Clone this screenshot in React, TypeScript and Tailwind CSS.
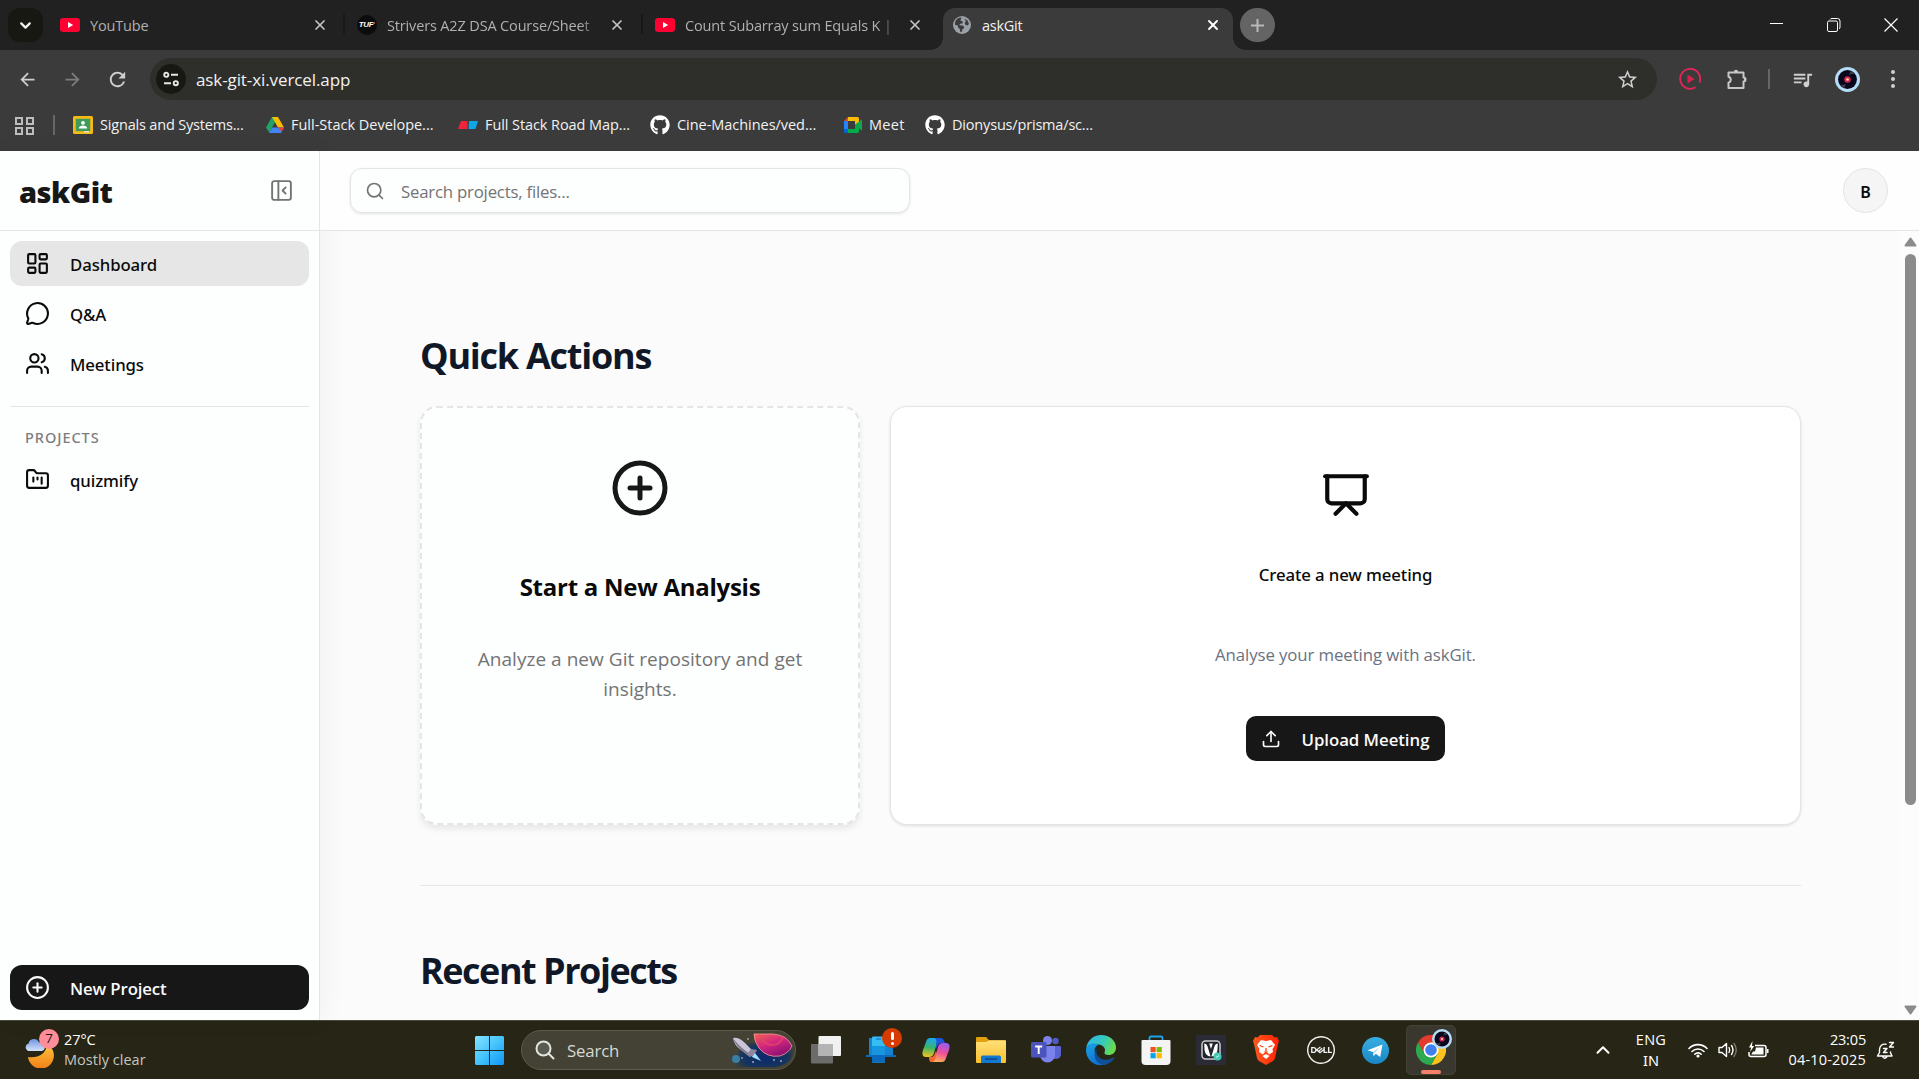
import type { ReactNode } from 'react'
import {
  ChevronDown,
  ChevronUp,
  CirclePlus,
  FolderKanban,
  LayoutDashboard,
  MessageCircle,
  PanelLeftClose,
  Presentation,
  Search,
  Upload,
  Users,
  X,
} from 'lucide-react'
import { FaGithub } from 'react-icons/fa'
import { SiDell } from 'react-icons/si'
import { MdArrowBack, MdArrowForward, MdQueueMusic, MdRefresh, MdStarBorder } from 'react-icons/md'

/* ---------- small drawings ---------- */

function YoutubeIcon() {
  return (
    <svg className="h-[14px] w-5 shrink-0" viewBox="0 0 20 14">
      <rect width="20" height="14" rx="3.2" fill="#ff0033" />
      <path d="M8 4v6l5.2-3z" fill="#fff" />
    </svg>
  )
}

function TufIcon() {
  return (
    <span className="flex h-5 w-5 shrink-0 items-center justify-center rounded-full bg-[#0c0c0c]">
      <span className="font-['Liberation_Sans',sans-serif] text-[8px] leading-none font-bold tracking-[-0.4px] text-white italic">
        TUF
      </span>
      <span className="mb-1 h-[2px] w-[2px] rounded-full bg-[#e0622f]" />
    </span>
  )
}

function GlobeIcon() {
  return (
    <svg className="h-[18px] w-[18px] shrink-0" viewBox="0 0 18 18">
      <circle cx="9" cy="9" r="9" fill="#9aa0a6" />
      <path
        d="M2 7.2c0-2.3 1.9-4.6 4.3-5.4L8.6 1.600 7.400 4.600l2.400 1-.4 1.900-2.600.2-.3 1.500 3.200.2 1.500 1.600-.3 1.500-1.600.8-.2 2.300-1.700.7-.6-3.200-1.700-1.500-.3-2L2 8.700z"
        fill="#3b3b3b"
      />
      <path d="M11.500 2.600l3.200 2.200 1.300 3.200-1.500 1.500-2.200-.7-.6-1.900 1.100-1.500z" fill="#3b3b3b" />
    </svg>
  )
}

function TuneIcon() {
  return (
    <svg className="h-[18px] w-[18px]" viewBox="0 0 18 18" fill="none" stroke="#e6e6e6" strokeWidth="1.9">
      <circle cx="4.300" cy="4.800" r="2.100" />
      <path d="M9 4.800h7M2 13.200h7" />
      <circle cx="13.800" cy="13.200" r="2.100" />
    </svg>
  )
}

function ClassroomIcon() {
  return (
    <svg className="h-[18px] w-5" viewBox="0 0 20 18">
      <rect width="20" height="18" rx="1.500" fill="#f5ba15" />
      <rect x="2.800" y="2.800" width="14.400" height="12.400" fill="#3f9b59" />
      <circle cx="10" cy="6.800" r="1.900" fill="#fff" />
      <path d="M5.800 12.400c.3-2 2-2.800 4.200-2.800s3.900.8 4.200 2.800z" fill="#fff" />
      <path d="M11 15.200h5v1.200h-5z" fill="#e8eaed" />
    </svg>
  )
}

function DriveIcon() {
  return (
    <svg className="h-4 w-[18px]" viewBox="0 0 18 16">
      <path d="M6 0h6L9 5.300 3.100 15.500 0 10.500z" fill="#1fa463" />
      <path d="M6 0h6l6 10.500h-6z" fill="#fbbc04" />
      <path d="M6 10.500h12L15 16H3z" fill="#4285f4" />
      <path d="M12 10.500h6L15.500 15z" fill="#ea4335" />
    </svg>
  )
}

function RoadmapIcon() {
  return (
    <svg className="h-2 w-5" viewBox="0 0 20 8">
      <path d="M3 0h6.500v8H0z" fill="#ef233c" />
      <path d="M11 0h9l-2.500 8H10.500z" fill="#0ea5e9" />
    </svg>
  )
}

function MeetIcon() {
  return (
    <svg className="h-4 w-[18px]" viewBox="0 0 18 16">
      <path d="M4 0h9.500q1.500 0 1.500 1.500V5l-4 3V4H4z" fill="#fbbc04" />
      <path d="M0 4l4-4v4z" fill="#ea4335" />
      <path d="M0 4h4v8H0z" fill="#2684fc" />
      <path d="M0 12h4v4H1.500Q0 16 0 14.500z" fill="#0066da" />
      <path d="M4 12h7V8l4 3v3.500q0 1.500-1.500 1.500H4z" fill="#00ac47" />
      <path d="M11 8l6-5q1-.7 1 .6v8.800q0 1.300-1 .6z" fill="#12a454" />
    </svg>
  )
}

function PuzzleIcon() {
  return (
    <svg className="h-[22px] w-[22px]" viewBox="0 0 22 22" fill="none" stroke="#c7c7c7" strokeWidth="2" strokeLinejoin="round">
      <path d="M2.500 4.500h15v5a2 2 0 0 1 0 4v6.500h-15v-5.200c3-1 3-5 0-6z" />
      <path d="M7.800 4a2.200 2.200 0 0 1 4.400 0zM18 9.300a2.200 2.200 0 0 1 0 4.400z" fill="#c7c7c7" stroke="none" />
    </svg>
  )
}

function VinylAvatar({ className }: { className: string }) {
  return (
    <svg className={className} viewBox="0 0 26 26">
      <circle cx="13" cy="13" r="13" fill="#b5dcf7" />
      <circle cx="13" cy="13" r="9.800" fill="#07061a" />
      <path d="M14.500 8l2-3.800a9.800 9.800 0 0 1 4 2.800zM11.500 18l-2 3.800a9.800 9.800 0 0 1-4-2.800z" fill="#3c3d4d" />
      <circle cx="13" cy="13" r="3.400" fill="#d4235c" />
      <circle cx="13" cy="13" r="1.400" fill="#ffd98a" />
    </svg>
  )
}

/* ---------- browser chrome ---------- */

function Tab({ icon, title, className, fade }: { icon: ReactNode; title: string; className: string; fade?: boolean }) {
  return (
    <div className={'flex h-[42px] items-center pb-2 ' + className}>
      {icon}
      <span
        className={
          'ml-[10px] flex-1 overflow-hidden pt-px text-[14.5px] tracking-[-0.15px] whitespace-nowrap text-[#b0b0b0] ' +
          (fade ? 'mask-r-from-90% mask-r-to-100%' : '')
        }
      >
        {title}
      </span>
      <X className="ml-2 h-4 w-4 shrink-0 text-[#c4c4c4]" strokeWidth={2.600} />
    </div>
  )
}

function TabStrip() {
  return (
    <div className="flex h-[50px] items-start bg-[#212121] pt-2">
      <button className="ml-2 flex h-[34px] w-[35px] items-center justify-center rounded-[12px] bg-[#171812]">
        <ChevronDown className="h-[17px] w-[17px] text-[#eeeeee]" strokeWidth={3.200} />
      </button>
      <Tab icon={<YoutubeIcon />} title="YouTube" className="ml-[17px] w-[268px]" />
      <span className="mt-[6px] ml-[15px] h-5 w-[2px] bg-[#181912]" />
      <Tab icon={<TufIcon />} title="Strivers A2Z DSA Course/Sheet" className="ml-[12px] w-[268px]" fade />
      <span className="mt-[6px] ml-[16px] h-5 w-[2px] bg-[#181912]" />
      <Tab icon={<YoutubeIcon />} title="Count Subarray sum Equals K |" className="ml-[12px] w-[268px]" fade />
      <div className="relative ml-[20px] flex h-[42px] w-[290px] items-center rounded-t-[12px] bg-[#3b3b3b] pb-2 pl-[10px]">
        <span className="absolute bottom-0 -left-3 h-3 w-3 bg-[radial-gradient(circle_at_0_0,#212121_11.5px,#3b3b3b_12px)]" />
        <span className="absolute -right-3 bottom-0 h-3 w-3 bg-[radial-gradient(circle_at_100%_0,#212121_11.5px,#3b3b3b_12px)]" />
        <GlobeIcon />
        <span className="ml-[11px] flex-1 pt-px text-[14.5px] tracking-[-0.26px] text-[#f1f1f1]">askGit</span>
        <X className="mr-[12px] h-4 w-4 text-white" strokeWidth={2.800} />
      </div>
      <span className="ml-[7px] flex h-[34px] w-[35px] items-center justify-center rounded-full bg-[#646464]">
        <svg className="h-[13px] w-[13px]" viewBox="0 0 13 13" stroke="#b9b9b9" strokeWidth="2">
          <path d="M6.500 0v13M0 6.500h13" />
        </svg>
      </span>
      <div className="mt-[10px] ml-auto flex items-center gap-[43px] pr-[21px]">
        <svg className="h-[14px] w-[14px]" viewBox="0 0 14 14" stroke="#fff">
          <path d="M0 5.500h13" />
        </svg>
        <svg className="h-[14px] w-[14px]" viewBox="0 0 14 14" fill="none" stroke="#fff">
          <rect x=".5" y="3" width="10" height="10.500" rx="1.500" />
          <path d="M3 1.500Q3.500.5 5 .5h5.500Q13 .5 13 3v6q0 1.500-1 2" />
        </svg>
        <svg className="h-[14px] w-[14px]" viewBox="0 0 14 14" stroke="#fff" strokeWidth="1.200">
          <path d="M.5.500l13 13M13.500.500l-13 13" />
        </svg>
      </div>
    </div>
  )
}

function Toolbar() {
  return (
    <div className="flex h-[58px] items-center bg-[#3b3b3b]">
      <MdArrowBack className="ml-[17px] h-[21px] w-[21px] text-[#cfcfcf]" />
      <MdArrowForward className="ml-[24px] h-[21px] w-[21px] text-[#7d7d7d]" />
      <MdRefresh className="ml-[23px] h-[23px] w-[23px] text-[#cfcfcf]" />
      <div className="ml-[21px] flex h-[42px] w-[1507px] items-center rounded-full bg-[#2e2f2b]">
        <span className="ml-[6px] flex h-[30px] w-[30px] items-center justify-center rounded-full bg-[#171812]">
          <TuneIcon />
        </span>
        <span className="mt-[2px] ml-[10px] flex-1 text-[17px] tracking-[-0.1px] text-[#f2f2f2]">ask-git-xi.vercel.app</span>
        <MdStarBorder className="mr-[18px] h-[23px] w-[23px] text-[#cfcfcf]" />
      </div>
      <svg className="ml-[22px] h-[22px] w-[22px]" viewBox="0 0 22 22">
        <path d="M16.500 19.300A10 10 0 1 1 20.500 14.500" fill="none" stroke="#e3265a" strokeWidth="1.800" />
        <path d="M8.500 6.500v9l7-4.500z" fill="#d8224e" />
      </svg>
      <span className="ml-[25px]">
        <PuzzleIcon />
      </span>
      <span className="ml-[20px] h-5 w-[2px] bg-[#666666]" />
      <MdQueueMusic className="ml-[21px] h-[23px] w-[23px] text-[#cfcfcf]" />
      <VinylAvatar className="ml-[21px] h-[25px] w-[25px]" />
      <span className="ml-[31px] flex flex-col gap-[3px]">
        <span className="h-1 w-1 rounded-full bg-[#cfcfcf]" />
        <span className="h-1 w-1 rounded-full bg-[#cfcfcf]" />
        <span className="h-1 w-1 rounded-full bg-[#cfcfcf]" />
      </span>
    </div>
  )
}

function Bookmark({ icon, title, className }: { icon: ReactNode; title: string; className: string }) {
  return (
    <span className={'flex items-center gap-[7px] whitespace-nowrap ' + className}>
      {icon}
      <span className="text-[14.5px] text-[#f2f2f2]">{title}</span>
    </span>
  )
}

function BookmarksBar() {
  return (
    <div className="flex h-[43px] items-center bg-[#3b3b3b] pb-[9px]">
      <svg className="mt-[2px] ml-[15px] h-[18px] w-[19px]" viewBox="0 0 19 18" fill="none" stroke="#bdbdbd" strokeWidth="2">
        <path d="M1 1h6v6H1zM12 1h6v6h-6zM1 11h6v6H1zM12 11h6v6h-6z" />
      </svg>
      <span className="ml-[19px] h-5 w-[2px] bg-[#666666]" />
      <Bookmark icon={<ClassroomIcon />} title="Signals and Systems..." className="ml-[18px] w-[193px] tracking-[-0.18px]" />
      <Bookmark icon={<DriveIcon />} title="Full-Stack Develope..." className="w-[192px] tracking-[-0.01px]" />
      <Bookmark icon={<RoadmapIcon />} title="Full Stack Road Map..." className="w-[192px] tracking-[-0.08px]" />
      <Bookmark icon={<FaGithub className="h-5 w-5 text-white" />} title="Cine-Machines/ved..." className="w-[194px] tracking-[-0.04px]" />
      <Bookmark icon={<MeetIcon />} title="Meet" className="w-[81px] tracking-[0.3px]" />
      <Bookmark icon={<FaGithub className="h-5 w-5 text-white" />} title="Dionysus/prisma/sc..." className="tracking-[-0.18px]" />
    </div>
  )
}

/* ---------- application ---------- */

function NavItem({ icon, label, className }: { icon: ReactNode; label: string; className?: string }) {
  return (
    <a className={'flex h-[45px] items-center gap-5 rounded-[12px] px-[15px] text-[#0a0a0a] ' + (className ?? '')}>
      {icon}
      <span className="pt-[2px] font-['Noto_Sans',sans-serif] text-[16.8px] font-medium tracking-[-0.1px]">{label}</span>
    </a>
  )
}

function Sidebar() {
  return (
    <aside className="z-10 flex w-[320px] shrink-0 flex-col border-r border-[#e4e5e5] bg-[#fdfefe] shadow-[4px_0_24px_rgba(0,0,0,0.045)]">
      <div className="flex h-20 shrink-0 items-center justify-between border-b border-[#e4e5e5] pr-[25px] pl-[19px]">
        <span className="pt-[2px] font-['Noto_Sans',sans-serif] text-[29px] font-black tracking-[-0.5px] text-[#171717]">askGit</span>
        <PanelLeftClose className="h-[25px] w-[25px] text-[#737373]" strokeWidth={1.800} />
      </div>
      <nav className="mx-[10px] mt-[10px] flex flex-col gap-[5px]">
        <NavItem icon={<LayoutDashboard className="h-[25px] w-[25px]" />} label="Dashboard" className="bg-[#e5e6e5]" />
        <NavItem icon={<MessageCircle className="h-[25px] w-[25px]" />} label="Q&amp;A" />
        <NavItem icon={<Users className="h-[25px] w-[25px]" />} label="Meetings" />
      </nav>
      <div className="mx-[10px] mt-5 border-t border-[#e4e5e5]" />
      <div className="mt-[18px] ml-[25px] flex h-[25px] items-center font-['Noto_Sans',sans-serif] text-[14.5px] font-medium tracking-[0.95px] text-[#7c7d7d]">
        PROJECTS
      </div>
      <div className="mx-[10px] mt-[7px]">
        <NavItem icon={<FolderKanban className="h-[25px] w-[25px]" />} label="quizmify" />
      </div>
      <button className="mx-[10px] mt-auto mb-[10px] flex h-[45px] shrink-0 items-center gap-5 rounded-[12px] bg-[#171717] px-[15px] text-[#fafafa]">
        <CirclePlus className="h-[25px] w-[25px]" />
        <span className="pt-[2px] text-[16.8px] font-semibold tracking-[-0.13px]">New Project</span>
      </button>
    </aside>
  )
}

function Header() {
  return (
    <header className="z-20 flex h-20 shrink-0 items-center justify-between border-b border-[#e4e5e5] bg-[#fefefe] pr-[31px] pl-[30px]">
      <div className="flex h-[45px] w-[560px] items-center rounded-[12px] border border-[#e4e5e5] bg-[#fdfefe] pl-[14px] shadow-[0_1px_3px_rgba(0,0,0,0.1)]">
        <Search className="h-5 w-5 text-[#737373]" />
        <span className="ml-4 pt-[2px] text-[16.8px] tracking-[-0.21px] text-[#737373]">Search projects, files...</span>
      </div>
      <span className="flex h-[45px] w-[45px] items-center justify-center rounded-full border border-[#e4e4e4] bg-[#f5f5f5] pt-[2px] font-['Noto_Sans',sans-serif] text-[16px] font-semibold text-[#0a0a0a]">
        B
      </span>
    </header>
  )
}

function Dashboard() {
  return (
    <main className="flex min-h-0 flex-1 bg-[#fbfbfb]">
      <div className="w-[1520px] overflow-hidden pt-[100px] pl-[100px]">
        <div className="w-[1381px]">
          <h2 className="h-[50px] text-[36px] leading-[50px] font-bold tracking-[-1.25px] text-[#101828]">Quick Actions</h2>
          <div className="mt-[25px] flex h-[419px] gap-[30px]">
            <section className="flex w-[440px] shrink-0 flex-col items-center rounded-[17px] border-2 border-dashed border-[#e5e5e5] bg-[#fdfefe] pt-[50px] text-center shadow-[0_4px_6px_rgba(0,0,0,0.08)]">
              <CirclePlus className="h-[60px] w-[60px] text-[#171717]" />
              <h3 className="mt-[54px] text-[24px] leading-[30px] font-bold tracking-[-0.26px] text-[#0a0a0a]">Start a New Analysis</h3>
              <p className="mt-[42px] w-[350px] text-[19px] leading-[30px] tracking-[0.04px] text-[#737373]">
                Analyze a new Git repository and get insights.
              </p>
            </section>
            <section className="flex w-[911px] shrink-0 flex-col items-center rounded-[17px] border border-[#e5e5e5] bg-white pt-[63px] shadow-[0_1px_3px_rgba(0,0,0,0.12)]">
              <Presentation className="h-[50px] w-[50px] text-[#0a0a0a]" />
              <h3 className="mt-[43px] font-['Noto_Sans',sans-serif] text-[16.8px] leading-[24px] font-medium tracking-[-0.11px] text-[#0a0a0a]">
                Create a new meeting
              </h3>
              <p className="mt-[56px] text-[16.8px] leading-[24px] tracking-[-0.09px] text-[#6a7282]">Analyse your meeting with askGit.</p>
              <button className="mt-[49px] flex h-[45px] w-[199px] items-center rounded-[10px] bg-[#171717] pl-[15px] text-[#fafafa]">
                <Upload className="h-5 w-5" />
                <span className="ml-[20.5px] pt-[2px] text-[16.8px] font-semibold tracking-[-0.04px]">Upload Meeting</span>
              </button>
            </section>
          </div>
          <div className="mt-[60px] border-t border-[#e5e5e5]" />
          <h2 className="mt-[60px] h-[50px] text-[36px] leading-[50px] font-bold tracking-[-1.48px] text-[#101828]">Recent Projects</h2>
        </div>
      </div>
      <div className="ml-auto flex w-[19px] flex-col items-center bg-[#fcfcfc] pt-[6px] pb-[5px] pl-px">
        <svg className="h-[10px] w-[13px] shrink-0" viewBox="0 0 13 10">
          <path d="M6.500 1.500L11.500 8.500h-10z" fill="#8b8b8b" stroke="#8b8b8b" strokeWidth="2" strokeLinejoin="round" />
        </svg>
        <span className="mt-[7px] h-[551px] w-[11px] rounded-full bg-[#8b8b8b]" />
        <svg className="mt-auto h-[10px] w-[13px] shrink-0" viewBox="0 0 13 10">
          <path d="M6.500 8.500L11.500 1.500h-10z" fill="#8b8b8b" stroke="#8b8b8b" strokeWidth="2" strokeLinejoin="round" />
        </svg>
      </div>
    </main>
  )
}

/* ---------- Windows taskbar ---------- */

function WeatherIcon() {
  return (
    <svg className="h-[36px] w-[36px]" viewBox="0 0 36 36">
      <defs>
        <linearGradient id="moon" x1="0" y1="0" x2="0" y2="1">
          <stop offset="0" stopColor="#ffc83d" />
          <stop offset="1" stopColor="#f08018" />
        </linearGradient>
        <linearGradient id="cloud" x1="0" y1="0" x2="0" y2="1">
          <stop offset="0" stopColor="#6f93e0" />
          <stop offset="1" stopColor="#d5e2fb" />
        </linearGradient>
      </defs>
      <path d="M22.500 11c1 8-5 15.500-18.500 14A13 13 0 1 0 27.500 16z" fill="url(#moon)" />
      <path d="M4 19a4 4 0 0 1 .5-7.500 5.500 5.500 0 0 1 10.500-1A4.300 4.300 0 0 1 18 19z" fill="url(#cloud)" />
    </svg>
  )
}

function StartIcon() {
  return (
    <svg className="h-[29px] w-[29px]" viewBox="0 0 29 29">
      <defs>
        <linearGradient id="win" x1="0" y1="0" x2="1" y2="1">
          <stop offset="0" stopColor="#86e3ff" />
          <stop offset=".5" stopColor="#44c3fc" />
          <stop offset="1" stopColor="#0f94f5" />
        </linearGradient>
      </defs>
      <path d="M1 0h13v14H0V1zM15 0h13l1 1v13H15zM0 15h14v14H1l-1-1zM15 15h14v13l-1 1H15z" fill="url(#win)" />
    </svg>
  )
}

function SpaceArt() {
  return (
    <svg className="h-[34px] w-[62px]" viewBox="0 0 62 34">
      <defs>
        <radialGradient id="sky" cx=".55" cy=".7" r=".55">
          <stop offset="0" stopColor="#0d2a6d" />
          <stop offset=".65" stopColor="#15345e" />
          <stop offset="1" stopColor="#15345e" stopOpacity="0" />
        </radialGradient>
        <linearGradient id="planet" x1="0" y1="0" x2=".6" y2="1">
          <stop offset="0" stopColor="#f0624f" />
          <stop offset=".5" stopColor="#d42780" />
          <stop offset="1" stopColor="#8c1172" />
        </linearGradient>
      </defs>
      <path d="M0 34L12 10H24V1H44Q62 3 62 17T44 34z" fill="url(#sky)" />
      <path d="M23 1H42Q56 2 61 13Q58 20 49 23Q36 25 28 15Q23 8 23 1z" fill="url(#planet)" stroke="#ff9b9b" strokeWidth=".8" />
      <path d="M28 1q4 10 12 11t13-9" fill="none" stroke="#e84b63" strokeWidth="2" opacity=".6" />
      <path d="M2 5q6-1 12 5l9 9-4 5-9-7Q3 12 2 5z" fill="#c9c4d6" />
      <path d="M2 5q2 6 8 12l9 7 1.500-2Q8 14 2 5z" fill="#81798f" />
      <path d="M16 21l4-5 6 1-4 7z" fill="#8f879e" />
      <path d="M24 20l6 8-9-4z" fill="#9fe1ff" />
      <circle cx="5" cy="26" r="4" fill="#3a7ea6" />
      <g fill="#fff">
        <circle cx="17" cy="6" r=".7" />
        <circle cx="11" cy="25" r=".7" />
        <circle cx="22" cy="29" r=".8" />
        <circle cx="43" cy="27" r=".8" />
        <circle cx="50" cy="28" r=".8" />
      </g>
    </svg>
  )
}

function TaskViewIcon() {
  return (
    <svg className="h-[30px] w-[30px]" viewBox="0 0 30 30">
      <rect x="0" y="9" width="22" height="19.500" rx="1" fill="#6c6c6c" />
      <rect x="7.500" y="1" width="22.500" height="20" rx="1" fill="#f1f1f1" />
      <rect x="7.500" y="9" width="14.500" height="12" fill="#b4b4b4" />
    </svg>
  )
}

function PhoneLinkIcon() {
  return (
    <svg className="h-[30px] w-[30px]" viewBox="0 0 30 30">
      <path d="M3 3h24v17H3z" fill="#1583d4" />
      <path d="M0 20h30v2H0z" fill="#0c6ab8" />
      <rect x="6" y="1.500" width="13" height="26" rx="1.200" fill="#35bdf3" />
      <path d="M6 11h13v15.500q0 1-1 1H7q-1 0-1-1z" fill="#1795df" />
      <path d="M6 20h13v6.500q0 1-1 1H7q-1 0-1-1z" fill="#0b69bd" />
      <path d="M10 4h5" stroke="#0b69bd" />
    </svg>
  )
}

function CopilotIcon() {
  return (
    <svg className="h-[28px] w-[28px]" viewBox="0 0 28 28">
      <defs>
        <linearGradient id="cpa" x1=".4" y1="0" x2=".3" y2="1">
          <stop offset="0" stopColor="#1ba7f0" />
          <stop offset=".5" stopColor="#37b56b" />
          <stop offset="1" stopColor="#f8c21a" />
        </linearGradient>
        <linearGradient id="cpb" x1=".7" y1="0" x2=".4" y2="1">
          <stop offset="0" stopColor="#9a5bf2" />
          <stop offset=".5" stopColor="#ef4f9a" />
          <stop offset="1" stopColor="#ffae5a" />
        </linearGradient>
      </defs>
      <path d="M8 2h11q-3 1-4 5l-3 10q-1 4-5 4H4Q-1 21 1 14l3-8q1-4 4-4z" fill="url(#cpa)" />
      <path d="M13 2h6q2 0 3 3l1 2h-3q-4 0-5 4l-.5 2q-1-5 0-8z" fill="#1f56dd" />
      <path d="M20 26H9q3-1 4-5l3-10q1-4 5-4h3q5 0 3 7l-3 8q-1 4-4 4z" fill="url(#cpb)" />
      <path d="M7 21h2q3 0 4-4l1-2q1 4-1 9-1 2-4 2-2 0-2-5z" fill="#f4692f" />
    </svg>
  )
}

function ExplorerIcon() {
  return (
    <svg className="h-[30px] w-[30px]" viewBox="0 0 30 30">
      <defs>
        <linearGradient id="fold" x1="0" y1="0" x2="0" y2="1">
          <stop offset="0" stopColor="#ffe07b" />
          <stop offset="1" stopColor="#fbc02a" />
        </linearGradient>
      </defs>
      <path d="M0 3q0-1 1-1h9l3 3h16q1 0 1 1v8H0z" fill="#e0a010" />
      <path d="M0 8q0-1 1-1h9l3-1.500h16q1 0 1 1V27q0 1-1 1H1q-1 0-1-1z" fill="url(#fold)" />
      <path d="M5 28v-6q0-1.500 1.500-1.500h17q1.500 0 1.500 1.500v6z" fill="#1378cf" />
      <path d="M9 24h12" stroke="#0b4b94" strokeWidth="1.600" />
    </svg>
  )
}

function TeamsIcon() {
  return (
    <svg className="h-[30px] w-[30px]" viewBox="0 0 30 30">
      <circle cx="24.500" cy="6" r="3.200" fill="#5059c9" />
      <path d="M19 11h10q1 0 1 1v7a5 5 0 0 1-9 3z" fill="#5b63d3" />
      <circle cx="16.500" cy="5.500" r="4.500" fill="#7b83eb" />
      <path d="M9 11h15v9a7.500 7.500 0 0 1-15 0z" fill="#7b83eb" />
      <rect x="0" y="7" width="15.500" height="15.500" rx="1.500" fill="#4b53bc" />
      <path d="M4.200 11.500h7M7.700 11.500V19" stroke="#fff" strokeWidth="1.900" />
    </svg>
  )
}

function EdgeIcon() {
  return (
    <svg className="h-[30px] w-[30px]" viewBox="0 0 30 30">
      <defs>
        <linearGradient id="edgeTop" x1="0" y1=".2" x2="1" y2=".5">
          <stop offset="0" stopColor="#2fb6ea" />
          <stop offset=".55" stopColor="#35c9bd" />
          <stop offset="1" stopColor="#6bdc45" />
        </linearGradient>
        <linearGradient id="edgeLow" x1="0" y1="0" x2=".5" y2="1">
          <stop offset="0" stopColor="#1aa2e6" />
          <stop offset="1" stopColor="#0f6fd0" />
        </linearGradient>
      </defs>
      <path d="M.2 13A15 15 0 0 1 15 0c9 0 15 6 15 12.500 0 5-3.500 7.500-7.500 7.500-3 0-4.500-1-4-2.500 1.500-3 0-7-5.500-8C8 9 2 9 .2 13z" fill="url(#edgeTop)" />
      <path d="M.2 13C2 8.500 8 7.500 13 9.500c-4 1.500-5 5-4 9 1.500 6 6.500 9 11 11A15 15 0 0 1 0 15z" fill="url(#edgeLow)" />
      <path d="M11 14c-2 4 1 9 6 10.500 4 1 8-.5 10.500-2 .8-.4 1.200.2.800.8A15 15 0 0 1 17 30C9 28 6 19 11 14z" fill="#0f4f97" />
    </svg>
  )
}

function StoreIcon() {
  return (
    <svg className="h-[30px] w-[30px]" viewBox="0 0 30 30">
      <path d="M8.500 7V3q0-1.500 1.500-1.500h10q1.500 0 1.500 1.500v4" fill="none" stroke="#1ea0ea" strokeWidth="1.800" />
      <path d="M.5 6q0-1 1-1h27q1 0 1 1v20q0 4-4 4h-21q-4 0-4-4z" fill="#f4f4f4" />
      <path d="M9.500 12h5.200v5.200H9.500z" fill="#f25022" />
      <path d="M15.600 12h5.200v5.200h-5.200z" fill="#7fba00" />
      <path d="M9.500 18.100h5.200v5.200H9.500z" fill="#00a4ef" />
      <path d="M15.600 18.100h5.200v5.200h-5.200z" fill="#ffb900" />
    </svg>
  )
}

function WingsIcon() {
  return (
    <svg className="h-[30px] w-[30px]" viewBox="0 0 30 30">
      <rect width="30" height="30" fill="#2b2b38" />
      <rect x="6" y="6" width="18" height="18" rx="3.500" fill="#22232c" stroke="#c9c9cc" strokeWidth="1.500" />
      <path d="M8.200 8.500q2.500 0 3.200 2.500l3.200 10.500q-5-.5-6-6zM21.800 8.500q-2.500 0-3.200 2.500l-3.200 10.500q5-.5 6-6z" fill="#fff" />
      <path d="M13.200 8.500h3.600L15 14z" fill="#fff" />
      <circle cx="21.500" cy="21.500" r="4" fill="#45c9b4" />
      <path d="M20 22.500l3-2" stroke="#c9fff4" />
    </svg>
  )
}

function BraveIcon() {
  return (
    <svg className="h-[30px] w-[26px]" viewBox="0 0 26 30">
      <defs>
        <linearGradient id="brave" x1="0" y1="0" x2="1" y2="0">
          <stop offset="0" stopColor="#ff5a1f" />
          <stop offset="1" stopColor="#ff2204" />
        </linearGradient>
      </defs>
      <path d="M7 0h12l2.500 2.500L24 2l2 4-1 3-3 14q-.5 2-2 3l-7 4-7-4q-1.500-1-2-3L1 9 0 6l2-4 2.500.5z" fill="url(#brave)" />
      <path
        d="M8 5l5 1 5-1 4 5-2.500 4 .5 3-4 2.500-1-1.500-2-1-2 1-1 1.500L6 17l.5-3L4 10z"
        fill="#fff"
      />
      <path d="M9.500 21l3.500-2 3.500 2-3.500 3z" fill="#fff" />
      <path d="M6.500 10.500l4 1.500M19.500 10.500l-4 1.500M11.500 16.500l1.500.8 1.500-.8M13 13v3" stroke="#ff3b10" strokeWidth="1.300" fill="none" />
    </svg>
  )
}

function TelegramIcon() {
  return (
    <svg className="h-[27px] w-[27px]" viewBox="0 0 27 27">
      <defs>
        <linearGradient id="tg" x1="0" y1="0" x2="0" y2="1">
          <stop offset="0" stopColor="#37aee2" />
          <stop offset="1" stopColor="#1a86c4" />
        </linearGradient>
      </defs>
      <circle cx="13.500" cy="13.500" r="13.500" fill="url(#tg)" />
      <path d="M5.500 13.200L20.500 7.500 18.200 20l-4.400-3.200-2.300 2.400-.5-4.200z" fill="#fff" />
      <path d="M11 15l6.500-5-5 6-1 3.200z" fill="#a9d4ee" />
    </svg>
  )
}

function ChromeIcon() {
  return (
    <svg className="h-[30px] w-[30px]" viewBox="0 0 30 30">
      <path d="M2 7.500a15 15 0 0 1 26 0L15 8.500 8.500 18.700z" fill="#e33b2e" />
      <path d="M28 7.500A15 15 0 0 1 15 30l6.500-11.300L15 7.500z" fill="#fcc31e" />
      <path d="M15 30A15 15 0 0 1 2 7.500l6.500 11.200 13 0z" fill="#2da94f" />
      <circle cx="15" cy="15" r="7.500" fill="#fff" />
      <circle cx="15" cy="15" r="5.800" fill="#3f7fee" />
    </svg>
  )
}

function TaskCell({ children }: { children: ReactNode }) {
  return <span className="relative flex h-[50px] w-[55px] shrink-0 items-center justify-center">{children}</span>
}

function Taskbar() {
  return (
    <footer className="flex h-[59px] shrink-0 items-center border-t border-[#48483c] bg-[#272616] font-['Open_Sans',sans-serif]">
      <div className="flex w-[475px] items-center">
        <span className="relative ml-[24px]">
          <WeatherIcon />
          <span className="absolute -top-[3px] left-[15px] flex h-5 w-5 items-center justify-center rounded-full bg-[#ff8e99] text-[13.5px] leading-none text-[#1b1b1b]">
            7
          </span>
        </span>
        <span className="ml-[4px] flex flex-col text-[14.5px] leading-[20px] text-white">
          <span className="tracking-[-0.1px]">27°C</span>
          <span className="tracking-[0.03px] text-[#c5c5c0]">Mostly clear</span>
        </span>
      </div>
      <StartIcon />
      <div className="ml-[17px] flex h-10 w-[275px] items-center rounded-full border border-[#5c5b4c] bg-[#434235] pl-[13px]">
        <svg className="h-5 w-5" viewBox="0 0 20 20" fill="none" stroke="#e4e4e0" strokeWidth="2">
          <circle cx="8.500" cy="8.500" r="7" fill="#595a50" />
          <path d="M13.500 13.500l5 5" strokeLinecap="round" />
        </svg>
        <span className="ml-[12px] flex-1 pt-px text-[16.8px] tracking-[-0.17px] text-[#d8d8d4]">Search</span>
        <span className="mr-[2px]">
          <SpaceArt />
        </span>
      </div>
      <div className="ml-[2px] flex">
        <TaskCell>
          <TaskViewIcon />
        </TaskCell>
        <TaskCell>
          <PhoneLinkIcon />
          <span className="absolute top-[3px] left-[29px] flex h-5 w-5 flex-col items-center justify-center gap-[2px] rounded-full bg-[#d83b01]">
            <span className="h-2 w-[3px] rounded-sm bg-white" />
            <span className="h-[3px] w-[3px] rounded-full bg-white" />
          </span>
        </TaskCell>
        <TaskCell>
          <CopilotIcon />
        </TaskCell>
        <TaskCell>
          <ExplorerIcon />
        </TaskCell>
        <TaskCell>
          <TeamsIcon />
        </TaskCell>
        <TaskCell>
          <EdgeIcon />
        </TaskCell>
        <TaskCell>
          <StoreIcon />
        </TaskCell>
        <TaskCell>
          <WingsIcon />
        </TaskCell>
        <TaskCell>
          <BraveIcon />
        </TaskCell>
        <TaskCell>
          <SiDell className="h-[28px] w-[28px] text-[#f2f2f2]" />
        </TaskCell>
        <TaskCell>
          <TelegramIcon />
        </TaskCell>
        <TaskCell>
          <span className="flex h-[50px] w-[50px] items-center justify-center rounded-[5px] border border-[#444235] bg-[#3a372f]">
            <ChromeIcon />
          </span>
          <VinylAvatar className="absolute top-[4px] left-[29px] h-5 w-5" />
          <span className="absolute bottom-[1px] left-[18px] h-[4px] w-5 rounded-full bg-[#f4816a]" />
        </TaskCell>
      </div>
      <ChevronUp className="ml-[134px] h-[22px] w-[22px] text-white" strokeWidth={2.200} />
      <span className="ml-[16px] flex w-[42px] flex-col items-center text-[14.5px] leading-[20px] text-white">
        <span className="tracking-[0.26px]">ENG</span>
        <span className="font-['Noto_Sans',sans-serif]">IN</span>
      </span>
      <svg className="ml-[16px] h-[16px] w-[20px]" viewBox="0 0 20 16" fill="none" stroke="#fff" strokeWidth="1.600" strokeLinecap="round">
        <path d="M1 6.500a12.500 12.500 0 0 1 18 0M4 9.500a8.500 8.500 0 0 1 12 0M6.800 12.200a4.500 4.500 0 0 1 6.400 0" />
        <circle cx="10" cy="14" r="1.600" fill="#fff" stroke="none" />
      </svg>
      <svg className="ml-[10px] h-[18px] w-[20px]" viewBox="0 0 20 18" fill="none" stroke="#fff" strokeWidth="1.400" strokeLinejoin="round" strokeLinecap="round">
        <path d="M1 6.500h3L8.500 2.500v13L4 11.500H1z" />
        <path d="M11 6.500q1.500 2.500 0 5M13.500 4.500q3 4.500 0 9" />
        <path d="M16 2.500q4.500 6.500 0 13" stroke="#77776c" />
      </svg>
      <svg className="ml-[10px] h-[18px] w-[21px]" viewBox="0 0 21 18">
        <path d="M7 4.500h9q2 0 2 2v7q0 2-2 2H3q-2 0-2-2V11" fill="none" stroke="#fff" strokeWidth="1.500" />
        <path d="M8 6.500h7.500v7H3.200L5 10.500h2z" fill="#fff" />
        <path d="M19 8h1.500v4H19z" fill="#fff" />
        <path d="M4.500 0L1 6.500h2.200L2 11l4.200-6H4z" fill="#fff" />
      </svg>
      <span className="ml-auto flex flex-col items-end text-[14.5px] leading-[20px] text-white">
        <span className="tracking-[-0.17px]">23:05</span>
        <span className="tracking-[0.18px]">04-10-2025</span>
      </span>
      <svg className="mr-[24px] ml-[10px] h-[19px] w-[19px]" viewBox="0 0 19 19" fill="none" stroke="#fff" strokeWidth="1.400" strokeLinecap="round" strokeLinejoin="round">
        <path d="M10 3.200Q4 2.500 3.500 8.500v3L1.500 15h14.500l-1.500-3.200V11M6.500 15.500q2 3.500 4.500 0" />
        <path d="M7.500 7.500h3.500l-3.500 4h3.500M13.500 1.500h4l-4 4.500h4" />
      </svg>
    </footer>
  )
}

export default function App() {
  return (
    <div className="flex h-[1079px] w-[1919px] flex-col overflow-hidden bg-white font-['Open_Sans',sans-serif]">
      <TabStrip />
      <Toolbar />
      <BookmarksBar />
      <div className="flex min-h-0 flex-1">
        <Sidebar />
        <div className="flex min-w-0 flex-1 flex-col">
          <Header />
          <Dashboard />
        </div>
      </div>
      <Taskbar />
    </div>
  )
}
